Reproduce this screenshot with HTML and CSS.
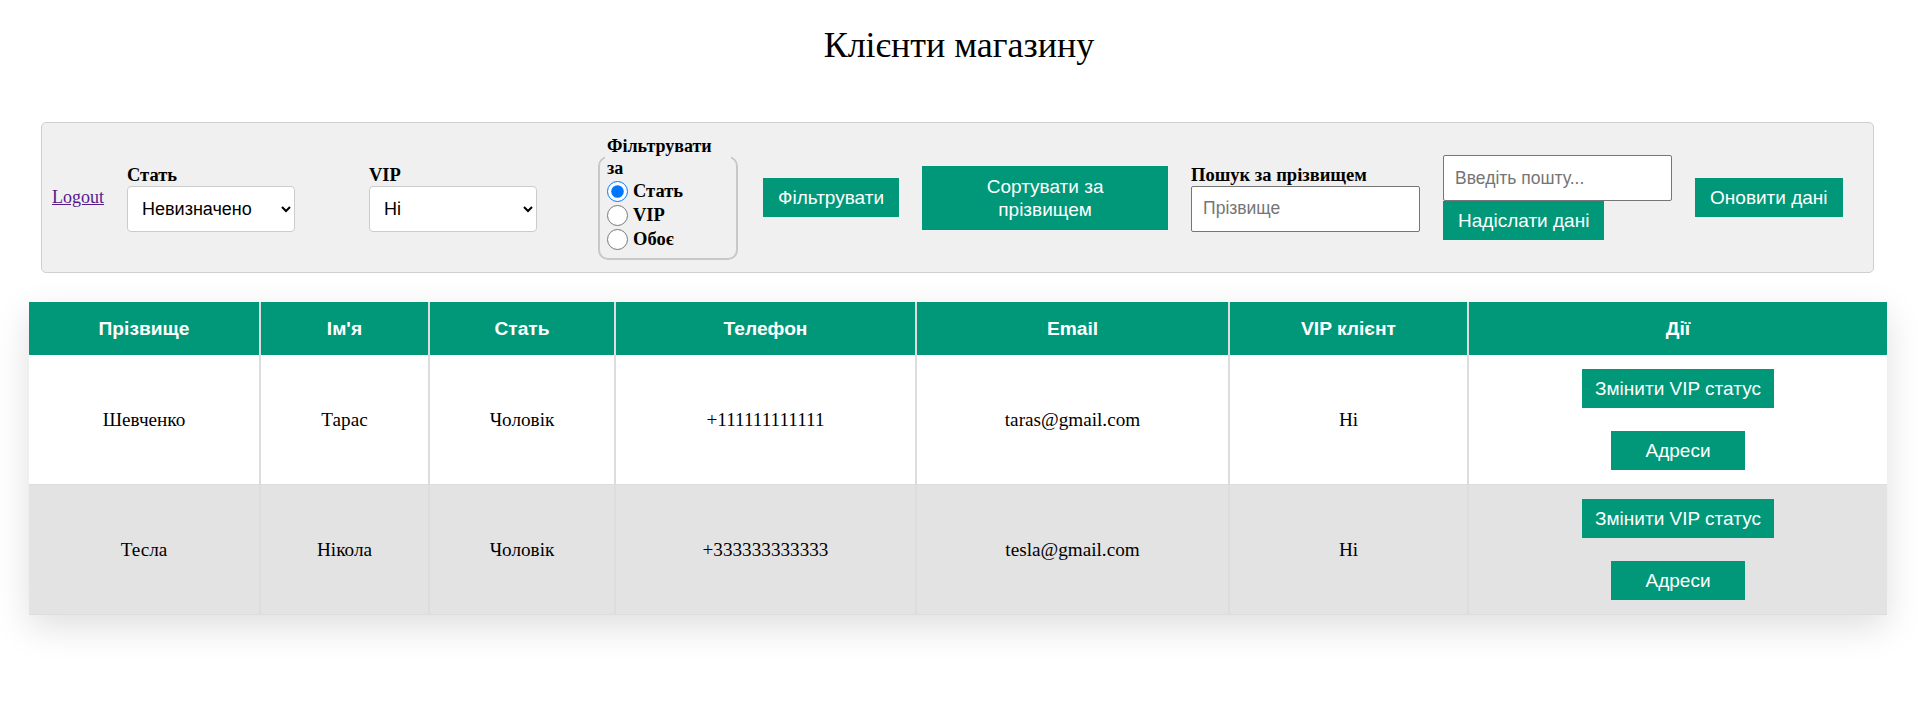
FILE: index.html
```html
<!DOCTYPE html>
<html lang="uk">
<head>
<meta charset="utf-8">
<title>Клієнти магазину</title>
<link rel="stylesheet" href="styles.css">
</head>
<body>
<h1 class="title">Клієнти магазину</h1>

<div class="toolbar">
  <a class="logout" href="#">Logout</a>

  <div class="field field-gender">
    <label class="field-label" for="gender">Стать</label>
    <select id="gender" class="select">
      <option>Невизначено</option>
      <option>Чоловік</option>
      <option>Жінка</option>
    </select>
  </div>

  <div class="field field-vip">
    <label class="field-label" for="vip">VIP</label>
    <select id="vip" class="select">
      <option>Ні</option>
      <option>Так</option>
    </select>
  </div>

  <fieldset class="filter-by">
    <legend class="filter-legend">Фільтрувати за</legend>
    <label class="radio"><input class="radio-input" type="radio" name="filter" checked>Стать</label>
    <label class="radio"><input class="radio-input" type="radio" name="filter">VIP</label>
    <label class="radio"><input class="radio-input" type="radio" name="filter">Обоє</label>
  </fieldset>

  <button class="btn" type="button">Фільтрувати</button>
  <button class="btn btn-sort" type="button">Сортувати за прізвищем</button>

  <div class="field field-search">
    <label class="field-label" for="surname">Пошук за прізвищем</label>
    <input id="surname" class="text-input" type="text" placeholder="Прізвище">
  </div>

  <div class="email-group">
    <input class="text-input" type="email" placeholder="Введіть пошту...">
    <button class="btn" type="button">Надіслати дані</button>
  </div>

  <button class="btn" type="button">Оновити дані</button>
</div>

<div class="table-wrap">
<table class="clients">
  <colgroup>
    <col class="c-surname">
    <col class="c-name">
    <col class="c-gender">
    <col class="c-phone">
    <col class="c-email">
    <col class="c-vip">
    <col class="c-actions">
  </colgroup>
  <thead>
    <tr>
      <th>Прізвище</th>
      <th>Ім'я</th>
      <th>Стать</th>
      <th>Телефон</th>
      <th>Email</th>
      <th>VIP клієнт</th>
      <th>Дії</th>
    </tr>
  </thead>
  <tbody>
    <tr>
      <td>Шевченко</td>
      <td>Тарас</td>
      <td>Чоловік</td>
      <td>+111111111111</td>
      <td>taras@gmail.com</td>
      <td>Ні</td>
      <td class="actions">
        <div class="actions-stack">
          <button class="btn btn-vip" type="button">Змінити VIP статус</button>
          <button class="btn btn-addr" type="button">Адреси</button>
        </div>
      </td>
    </tr>
    <tr>
      <td>Тесла</td>
      <td>Нікола</td>
      <td>Чоловік</td>
      <td>+333333333333</td>
      <td>tesla@gmail.com</td>
      <td>Ні</td>
      <td class="actions">
        <div class="actions-stack">
          <button class="btn btn-vip" type="button">Змінити VIP статус</button>
          <button class="btn btn-addr" type="button">Адреси</button>
        </div>
      </td>
    </tr>
  </tbody>
</table>
</div>
</body>
</html>
```

FILE: styles.css
```css
html {
  height: 100%;
  background: #ffffff;
}

body {
  box-sizing: border-box;
  min-height: 100%;
  margin: 0;
  padding: 8px 8px 90px;
  font-family: "Liberation Serif", "Times New Roman", serif;
  color: #000;
  background: #ffffff;
}

.title {
  margin: 17px 0 57px;
  font-size: 36px;
  line-height: 40px;
  font-weight: normal;
  text-align: center;
}

/* ---------- toolbar ---------- */
.toolbar {
  box-sizing: border-box;
  margin-left: 33px;
  width: 1833px;
  height: 151px;
  padding: 0 10px;
  display: flex;
  align-items: center;
  gap: 23px;
  background: #f0f0f0;
  border: 1px solid #cfcfcf;
  border-radius: 5px;
}

.logout {
  font-size: 18px;
  color: #551a8b;
  text-decoration: underline;
}

.field {
  display: flex;
  flex-direction: column;
  align-items: flex-start;
}

.field-gender { width: 219px; }
.field-vip { width: 204px; }

.field-label {
  font-size: 18.5px;
  font-weight: bold;
  line-height: 22px;
}

.select {
  box-sizing: border-box;
  width: 168px;
  height: 46px;
  padding: 0 10px;
  font-family: "Liberation Sans", Arial, sans-serif;
  font-size: 18px;
  color: #000;
  background: #ffffff;
  border: 1px solid #cccccc;
  border-radius: 4px;
}

.filter-by {
  box-sizing: border-box;
  width: 140px;
  margin: 0 2px;
  padding: 0 5px 7px;
  border: 2px solid #c8c8c8;
  border-radius: 10px;
}

.filter-legend {
  padding: 0 2px;
  font-size: 18px;
  font-weight: bold;
  line-height: 22px;
}

.radio {
  display: flex;
  align-items: center;
  height: 24px;
  font-size: 18.5px;
  font-weight: bold;
}

.radio-input {
  flex-shrink: 0;
  width: 21px;
  height: 21px;
  margin: 0 5px 0 2px;
}

.btn {
  font-family: "Liberation Sans", Arial, sans-serif;
  font-size: 19px;
  line-height: 23px;
  color: #ffffff;
  background: #009879;
  border: none;
  border-radius: 0;
  padding: 8px 15px;
  cursor: pointer;
}

.btn-sort {
  width: 246px;
  padding: 9px 32px;
}

.text-input {
  box-sizing: border-box;
  width: 229px;
  height: 46px;
  padding: 0 11px;
  font-family: "Liberation Sans", Arial, sans-serif;
  font-size: 17.5px;
  background: #ffffff;
  border: 1px solid #767676;
  border-radius: 2px;
}

.text-input::placeholder {
  color: #757575;
}

.email-group {
  display: flex;
  flex-direction: column;
  align-items: flex-start;
}

/* ---------- table ---------- */
.table-wrap {
  margin: 29px 0 0 21px;
  width: 1858px;
  box-shadow: 0 12px 34px rgba(0, 0, 0, 0.13);
}

.clients {
  width: 100%;
  table-layout: fixed;
  border-collapse: collapse;
}

.c-surname { width: 231px; }
.c-name { width: 169px; }
.c-gender { width: 186px; }
.c-phone { width: 301px; }
.c-email { width: 313px; }
.c-vip { width: 239px; }
.c-actions { width: 419px; }

.clients th {
  height: 53px;
  box-sizing: border-box;
  padding: 0 15px;
  background: #009879;
  color: #ffffff;
  font-family: "Liberation Sans", Arial, sans-serif;
  font-size: 19.2px;
  font-weight: bold;
  text-align: center;
  border-left: 2px solid #dddddd;
  border-right: 2px solid #dddddd;
}

.clients th:first-child,
.clients td:first-child { border-left: none; }
.clients th:last-child,
.clients td:last-child { border-right: none; }

.clients tbody tr {
  background: #ffffff;
  border-bottom: 1px solid #dddddd;
}

.clients tbody tr:nth-of-type(even) {
  background: #e3e3e3;
}

.clients td {
  padding: 14px 15px;
  font-size: 19.2px;
  text-align: center;
  border-left: 2px solid #dddddd;
  border-right: 2px solid #dddddd;
}

.actions-stack {
  display: flex;
  flex-direction: column;
  align-items: center;
  gap: 23px;
}

.btn-vip {
  padding: 8px 13px;
}

.btn-addr {
  width: 134px;
  padding: 8px 10px;
}
```
